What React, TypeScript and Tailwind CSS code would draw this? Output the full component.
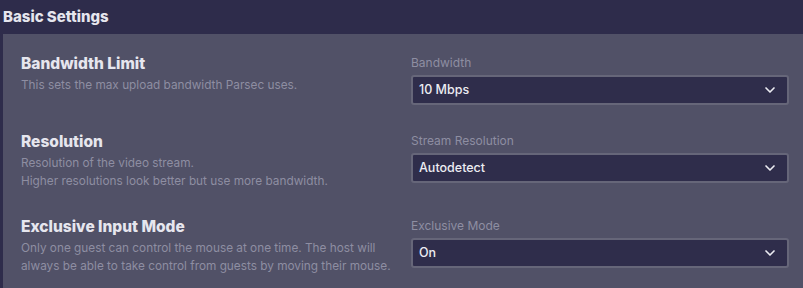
import { ChevronDown } from 'lucide-react';

interface SettingRowProps {
  title: string;
  description: string[];
  label: string;
  value: string;
  className?: string;
}

function SettingRow({ title, description, label, value, className }: SettingRowProps) {
  return (
    <div className={`flex items-start ${className ?? ''}`}>
      <div className="w-[408px] shrink-0 pl-[18px]">
        <h3 className="text-[15.5px] leading-5 font-extrabold text-[#e6e6ee]">{title}</h3>
        <div className="mt-[2px] text-[11.8px] leading-[18px] text-[#8e8ea2] whitespace-nowrap">
          {description.map((line) => (
            <p key={line}>{line}</p>
          ))}
        </div>
      </div>
      <div className="flex-1 pr-[14px]">
        <div className="text-[12px] leading-[18px] text-[#8e8ea2]">{label}</div>
        <div className="mt-[3px] h-[30px] flex items-center justify-between rounded-[3px] border-2 border-[#666679] bg-[#2f2d4b] pl-[6px] pr-[9px]">
          <span className="text-[12.5px] font-medium text-[#ececf2]">{value}</span>
          <ChevronDown className="w-[16px] h-[16px] text-[#ececf2]" strokeWidth={2.5} />
        </div>
      </div>
    </div>
  );
}

export default function App() {
  return (
    <div className="w-[803px] h-[288px] overflow-hidden bg-[#2e2c4b] font-['Inter',sans-serif]">
      <div className="h-[34px] flex items-center px-[3px]">
        <h2 className="text-[15px] font-extrabold text-[#e6e6ee]">Basic Settings</h2>
      </div>
      <div className="ml-[3px] h-[254px] bg-[#515167] pt-[20px]">
        <SettingRow
          title="Bandwidth Limit"
          description={['This sets the max upload bandwidth Parsec uses.']}
          label="Bandwidth"
          value="10 Mbps"
          className="mb-[27px]"
        />
        <SettingRow
          title="Resolution"
          description={['Resolution of the video stream.', 'Higher resolutions look better but use more bandwidth.']}
          label="Stream Resolution"
          value="Autodetect"
          className="mb-[27px]"
        />
        <SettingRow
          title="Exclusive Input Mode"
          description={[
            'Only one guest can control the mouse at one time. The host will',
            'always be able to take control from guests by moving their mouse.',
          ]}
          label="Exclusive Mode"
          value="On"
        />
      </div>
    </div>
  );
}
